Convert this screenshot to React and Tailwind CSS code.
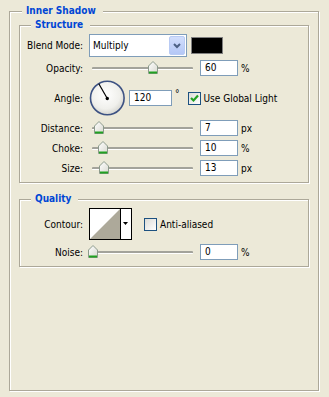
import React from 'react'

const font = { fontFamily: '"DejaVu Sans Condensed", "Liberation Sans", sans-serif' }

const etched = 'relative border border-[#ACA899] shadow-[1px_1px_0_#ffffff,inset_1px_1px_0_#ffffff]'

function GroupTitle({ children, left }) {
  return (
    <div className={`absolute -top-[8px] ${left} bg-[#ECE9D8] pl-[4px] pr-[7px] text-[10px] leading-[13px] font-bold text-[#0046D5]`}>
      {children}
    </div>
  )
}

function Label({ children }) {
  return <div className="w-[64px] shrink-0 pr-[1px] text-right">{children}</div>
}

function Thumb() {
  return (
    <svg width="10" height="13" viewBox="0 0 10 13">
      <defs>
        <linearGradient id="tg" x1="0" y1="0" x2="1" y2="1">
          <stop offset="0" stopColor="#ffffff" />
          <stop offset="1" stopColor="#d8d8d0" />
        </linearGradient>
      </defs>
      <path d="M0.5 5 L5 0.5 L9.5 5 L9.5 12.5 L0.5 12.5 Z" fill="url(#tg)" stroke="#8c9a8c" />
      <rect x="1" y="10.5" width="8" height="2" fill="#21A121" />
    </svg>
  )
}

function Slider({ pos }) {
  return (
    <div className="relative h-[16px] w-[111px] shrink-0">
      <div className="absolute left-[3px] top-[7px] h-[3px] w-[101px] rounded-[1px] border-t-2 border-[#A3A39B] bg-white" />
      <div className="absolute top-[1px]" style={{ left: pos }}>
        <Thumb />
      </div>
    </div>
  )
}

function NumBox({ value, w = 'w-[38px]' }) {
  return (
    <div className={`${w} h-[16px] shrink-0 border border-[#7F9DB9] bg-white pl-[4px] leading-[14px]`}>{value}</div>
  )
}

function Check({ checked }) {
  return (
    <div className="h-[13px] w-[13px] shrink-0 border border-[#1C5180] bg-gradient-to-br from-[#DCDCD7] to-white">
      {checked && (
        <svg width="11" height="11" viewBox="0 0 11 11">
          <path d="M2 5 L4.5 7.5 L9 2.5" fill="none" stroke="#21A121" strokeWidth="2.2" />
        </svg>
      )}
    </div>
  )
}

function Dial() {
  return (
    <svg width="37" height="36" viewBox="0 0 37 36" className="shrink-0">
      <defs>
        <radialGradient id="dg" cx="0.45" cy="0.4" r="0.6">
          <stop offset="0" stopColor="#ffffff" />
          <stop offset="0.7" stopColor="#f0f0ec" />
          <stop offset="1" stopColor="#d6d6d0" />
        </radialGradient>
      </defs>
      <circle cx="18.3" cy="18" r="16.8" fill="url(#dg)" stroke="#3D5283" strokeWidth="1.6" />
      <line x1="18.3" y1="18.5" x2="9.8" y2="3.8" stroke="#000" strokeWidth="1.2" />
      <circle cx="18.3" cy="18.5" r="1.7" fill="#000" />
    </svg>
  )
}

function Contour() {
  return (
    <svg width="43" height="32" viewBox="0 0 43 32" className="shrink-0">
      <rect x="0.5" y="0.5" width="42" height="31" fill="#fff" stroke="#000" />
      <polygon points="1,31 31,1 31,31" fill="#ADA99A" />
      <line x1="31.5" y1="1" x2="31.5" y2="31" stroke="#000" />
      <polygon points="34,14 39,14 36.5,17" fill="#000" />
    </svg>
  )
}

function SliderRow({ label, pos, value, unit, mt }) {
  return (
    <div className={`flex h-[16px] items-center ${mt}`}>
      <Label>{label}</Label>
      <div className="ml-[5px] flex items-center">
        <Slider pos={pos} />
        <NumBox value={value} />
        <span className="ml-[3px]">{unit}</span>
      </div>
    </div>
  )
}

export default function App() {
  return (
    <div className="h-[397px] w-[329px] overflow-hidden bg-[#ECE9D8] pl-[9px] pt-[11px] text-[10px] text-black" style={font}>
      <div className={`${etched} h-[380px] w-[310px]`}>
        <GroupTitle left="left-[12px]">Inner Shadow</GroupTitle>

        <div className={`${etched} ml-[9px] mt-[13px] h-[158px] w-[290px] pt-[8px]`}>
          <GroupTitle left="left-[11px]">Structure</GroupTitle>

          <div className="flex h-[23px] items-center">
            <Label>Blend Mode:</Label>
            <div className="ml-[5px] flex h-[23px] w-[98px] border border-[#7F9DB9] bg-white">
              <div className="flex-1 pl-[3px] leading-[21px]">Multiply</div>
              <div className="m-[1px] flex w-[16px] items-center justify-center rounded-[2px] border border-[#B9CBF4] bg-gradient-to-b from-[#D2DEFC] to-[#B4C7F6]">
                <svg width="8" height="6" viewBox="0 0 8 6">
                  <path d="M1 1 L4 4 L7 1" fill="none" stroke="#4D6185" strokeWidth="2" />
                </svg>
              </div>
            </div>
            <div className="ml-[4px] h-[17px] w-[32px] border border-[#808080] bg-black" />
          </div>

          <SliderRow label="Opacity:" pos="59px" value="60" unit="%" mt="mt-[3px]" />

          <div className="mt-[4px] flex h-[36px] items-center">
            <Label>Angle:</Label>
            <div className="ml-[5px] flex items-center">
              <Dial />
              <div className="ml-[3px]">
                <NumBox value="120" w="w-[43px]" />
              </div>
              <span className="ml-[3px] self-start mt-[9px] leading-[10px]">°</span>
              <div className="ml-[8px]">
                <Check checked />
              </div>
              <span className="ml-[3px]">Use Global Light</span>
            </div>
          </div>

          <SliderRow label="Distance:" pos="5px" value="7" unit="px" mt="mt-[4px]" />
          <SliderRow label="Choke:" pos="9px" value="10" unit="%" mt="mt-[4px]" />
          <SliderRow label="Size:" pos="10px" value="13" unit="px" mt="mt-[4px]" />
        </div>

        <div className={`${etched} ml-[9px] mt-[16px] h-[68px] w-[290px] pt-[8px]`}>
          <GroupTitle left="left-[11px]">Quality</GroupTitle>

          <div className="flex h-[32px] items-center">
            <Label>Contour:</Label>
            <div className="ml-[5px] flex items-center">
              <Contour />
              <div className="ml-[12px]">
                <Check />
              </div>
              <span className="ml-[3px]">Anti-aliased</span>
            </div>
          </div>

          <SliderRow label="Noise:" pos="-1px" value="0" unit="%" mt="mt-[4px]" />
        </div>
      </div>
    </div>
  )
}
